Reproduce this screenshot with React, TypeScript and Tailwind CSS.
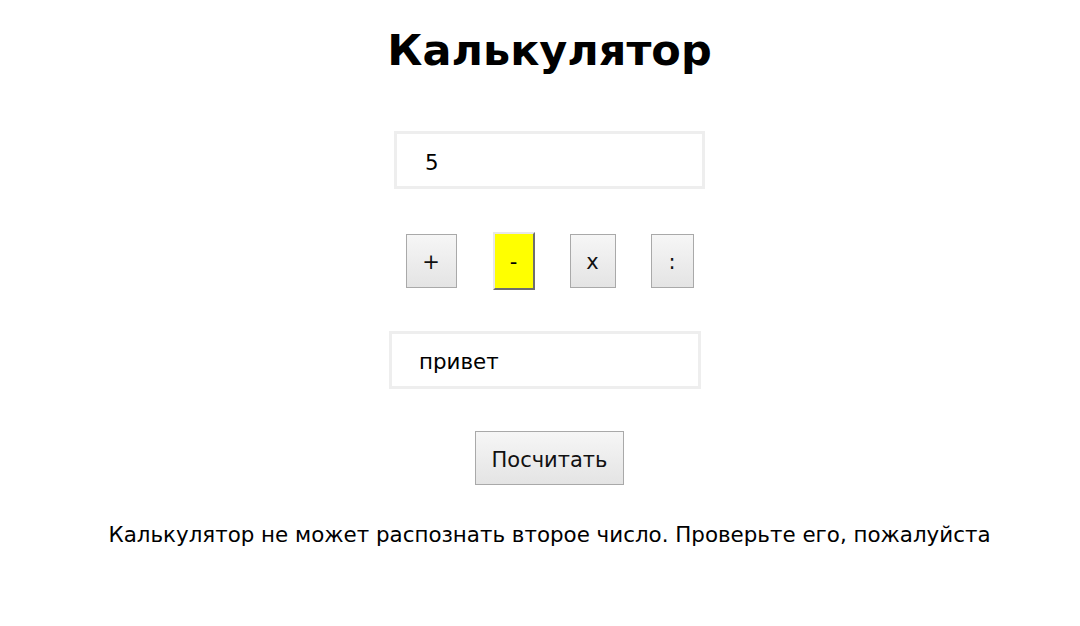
import React from "react";

const btn =
  "h-[54px] border border-[#a9a9a9] bg-gradient-to-b from-[#f6f6f6] to-[#e4e4e4] text-[21px] text-[#111] pt-[4px]";

export default function App() {
  return (
    <div className="w-[1080px] h-[626px] bg-white pl-[19px] flex flex-col items-center" style={{ fontFamily: '"DejaVu Sans", Verdana, sans-serif' }}>
      <h1 className="mt-[26px] text-[43px] font-bold leading-[48px] text-black">Калькулятор</h1>
      <div className="mt-[57px] w-[311px] h-[58px] border-[3px] border-[#eeeeee] flex items-center pl-[28px] pt-[7px] text-[21.4px] text-black">
        5
      </div>
      <div className="mt-[43px] flex items-center">
        <button className={`${btn} w-[51px]`}>+</button>
        <button className="ml-[36px] w-[42px] h-[58px] pt-[4px] bg-[#ffff00] border-[2px] border-t-[#e8e8e8] border-l-[#e8e8e8] border-r-[#6e6e6e] border-b-[#6e6e6e] text-[21px] text-black">-</button>
        <button className={`${btn} ml-[35px] w-[46px]`}>x</button>
        <button className={`${btn} ml-[35px] w-[43px]`}>:</button>
      </div>
      <div className="mt-[41px] mr-[9px] w-[312px] h-[58px] border-[3px] border-[#eeeeee] flex items-center pl-[27px] pt-[5px] text-[21.4px] text-black">
        привет
      </div>
      <button className={`${btn} mt-[42px] w-[149px] px-0 text-[21.2px] pt-[6px]`}>Посчитать</button>
      <p className="mt-[36px] text-[21.4px] leading-[28px] text-black whitespace-nowrap">
        Калькулятор не может распознать второе число. Проверьте его, пожалуйста
      </p>
    </div>
  );
}
